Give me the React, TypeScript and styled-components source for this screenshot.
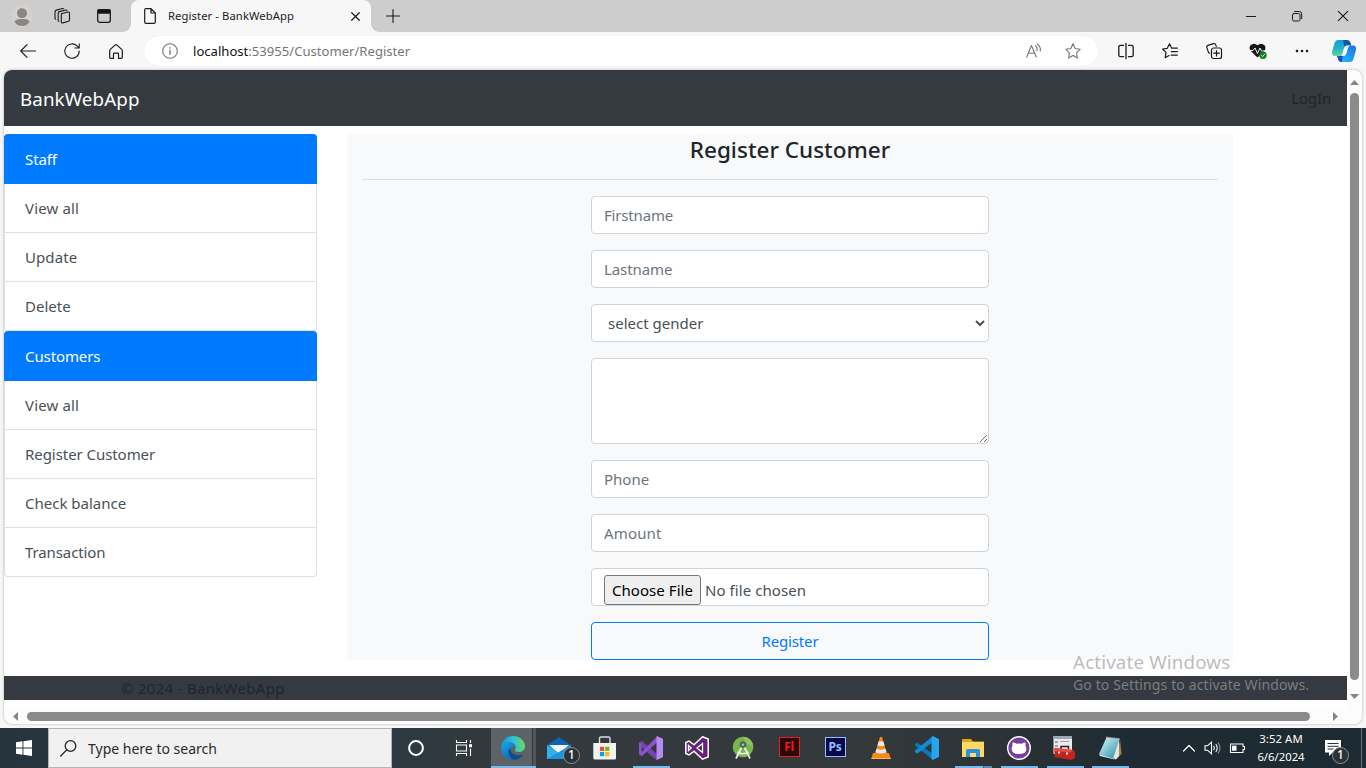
import React from "react";
import styled, { createGlobalStyle, css } from "styled-components";

const Global = createGlobalStyle`
  *, *::before, *::after { box-sizing: border-box; }
  html, body, #root { height: 100%; }
  body { margin: 0; overflow: hidden; font-family: "Noto Sans", "Open Sans", sans-serif; font-size: 15px; line-height: 24px; color: #212529; background: #f7f7f7; }
  svg { display: block; flex: none; overflow: visible; }
`;

const Screen = styled.div`
  position: relative;
  display: flex;
  flex-direction: column;
  width: 1366px;
  height: 768px;
  overflow: hidden;
`;

const Txt = styled.span<{ $ls?: number }>`
  letter-spacing: ${(p) => p.$ls ?? 0}px;
  white-space: nowrap;
`;

/* ---------- browser chrome ---------- */
const TabStrip = styled.div`
  display: flex;
  height: 32px;
  background: #cdcdcd;
`;
const StripCell = styled.div<{ $w: number }>`
  width: ${(p) => p.$w}px;
  display: flex;
  align-items: center;
  justify-content: center;
`;
const Tab = styled.div`
  position: relative;
  display: flex;
  align-items: center;
  width: 240px;
  margin-left: 3px;
  padding: 0 11px 0 13px;
  background: #f7f7f7;
  border-radius: 8px 8px 0 0;
  font-size: 11.25px;
  color: #1b1b1b;
  &::before, &::after {
    content: "";
    position: absolute;
    bottom: 0;
    width: 8px;
    height: 8px;
  }
  &::before { left: -8px; background: radial-gradient(circle at 0 0, #cdcdcd 7.5px, #f7f7f7 8px); }
  &::after { right: -8px; background: radial-gradient(circle at 100% 0, #cdcdcd 7.5px, #f7f7f7 8px); }
`;
const TabTitle = styled(Txt)`
  flex: 1;
  margin-left: 12px;
`;
const Spacer = styled.div`
  flex: 1;
`;
const Toolbar = styled.div`
  display: flex;
  align-items: center;
  height: 38px;
  padding: 0 0 0 6px;
  background: #f7f7f7;
`;
const ToolCell = styled.div<{ $w?: number }>`
  display: flex;
  align-items: center;
  justify-content: center;
  width: ${(p) => p.$w ?? 44}px;
  flex: none;
`;
const Address = styled.div`
  display: flex;
  align-items: center;
  width: 954px;
  height: 30px;
  margin: 0 6px 0 6px;
  padding: 0 17px 0 18px;
  border-radius: 15px;
  background: #fff;
  box-shadow: 0 0 1px #ddd;
  font-size: 13.1px;
  color: #767676;
  b { font-weight: 400; color: #111; }
`;
const Url = styled(Txt)`
  flex: 1;
  margin-left: 15px;
`;
const AddressIcons = styled.div`
  display: flex;
  gap: 23px;
`;

/* ---------- page frame ---------- */
const Frame = styled.div`
  display: grid;
  grid-template: 639px 15px / 1343px 15px;
  width: 1358px;
  height: 654px;
  margin: 0 4px 4px;
  overflow: hidden;
  border-radius: 8px;
  background: #fcfcfc;
  box-shadow: 0 0 3px rgba(0, 0, 0, 0.28);
`;
const Page = styled.div`
  display: flex;
  flex-direction: column;
  background: #fff;
`;
const VScroll = styled.div`
  display: flex;
  flex-direction: column;
  align-items: center;
  padding: 10px 0 9px;
`;
const HScroll = styled.div`
  display: flex;
  align-items: center;
  padding: 0 9px;
`;
const VThumb = styled.div`
  width: 9px;
  height: 587px;
  margin: 8px 0 14px;
  border-radius: 5px;
  background: #8b8b8b;
`;
const HThumb = styled.div`
  width: 1283px;
  height: 9px;
  margin: 0 23px 0 9px;
  border-radius: 5px;
  background: #8b8b8b;
`;

const Navbar = styled.nav`
  display: flex;
  align-items: center;
  justify-content: space-between;
  height: 56px;
  padding: 0 16px 0 16px;
  margin-bottom: 8px;
  background: #343a40;
  color: #212529;
`;
const Brand = styled(Txt)`
  padding-top: 1px;
  font-size: 18.75px;
  color: #fff;
`;
const Body = styled.div`
  display: flex;
  gap: 30px;
  height: 526px;
`;
const Sidebar = styled.div`
  width: 313px;
`;
const Group = styled.ul`
  margin: 0;
  padding: 0;
  list-style: none;
`;
const Item = styled.li<{ $active?: boolean }>`
  display: flex;
  align-items: center;
  height: 49px;
  padding: 0 20px;
  border: 1px solid #dfdfdf;
  border-top: 0;
  color: #495057;
  background: #fff;
  &:last-child { border-radius: 0 0 4px 4px; }
  ${(p) =>
    p.$active &&
    css`
      height: 50px;
      padding-top: 1px;
      color: #fff;
      background: #007bff;
      border-color: #007bff;
      border-radius: 4px 4px 0 0;
    `}
`;
const Panel = styled.section`
  display: flex;
  flex-direction: column;
  align-items: center;
  width: 886px;
  padding: 0 15px;
  background: #f8f9fb;
`;
const Title = styled.h4`
  width: 100%;
  height: 46px;
  margin: 0 0 16px;
  padding-top: 1px;
  border-bottom: 1px solid #dedfe1;
  text-align: center;
  font-size: 22.5px;
  line-height: 30px;
  font-weight: 500;
`;
const Form = styled.form`
  display: flex;
  flex-direction: column;
  gap: 16px;
  width: 398px;
`;
const control = css`
  display: block;
  width: 100%;
  height: 38px;
  margin: 0;
  border: 1px solid #ced4da;
  border-radius: 4px;
  background: #fff;
  color: #495057;
  font: 15px/24px "Noto Sans", "Open Sans", sans-serif;
  outline: none;
`;
const Input = styled.input<{ $ls?: number }>`
  ${control}
  padding: 6px 12px;
  letter-spacing: ${(p) => p.$ls ?? 0}px;
  &::placeholder { color: #6c757d; opacity: 1; }
`;
const Select = styled.select`
  ${control}
  padding: 6px 0 6px 12px;
`;
const Area = styled.textarea`
  ${control}
  height: 86px;
  resize: both;
`;
const FileInput = styled.input`
  ${control}
  padding: 6px 12px 0;
  overflow: hidden;
  letter-spacing: 0.07px;
  &::file-selector-button {
    width: 97px;
    height: 30px;
    padding: 0;
    margin: 0 4px 0 0;
    border: 1px solid #767676;
    border-radius: 3px;
    background: #efefef;
    color: #000;
    font: inherit;
    letter-spacing: inherit;
  }
`;
const Submit = styled.button`
  ${control}
  border-color: #007bff;
  background: transparent;
  color: #007bff;
  letter-spacing: -0.15px;
`;
const Footer = styled.footer`
  height: 24px;
  margin-top: 16px;
  padding-left: 117px;
  background: #343a40;
  color: #212529;
`;

const Watermark = styled.div`
  position: absolute;
  left: 1073px;
  top: 649px;
  display: flex;
  flex-direction: column;
  font-size: 14px;
  line-height: 20px;
  color: rgba(139, 139, 139, 0.85);
`;
const WatermarkTitle = styled(Txt)`
  font-size: 18.75px;
  line-height: 26px;
  color: #bcbdbe;
`;

/* ---------- taskbar ---------- */
const Taskbar = styled.div`
  display: flex;
  height: 40px;
  background: linear-gradient(90deg, #26353d 0, #2b3940 392px, #33393d 500px, #34393c 860px, #2c3235 1000px, #1e2b32 1130px, #1c2a31 100%);
  color: #fff;
`;
const Start = styled.div`
  display: flex;
  align-items: center;
  justify-content: center;
  width: 48px;
`;
const Search = styled.div`
  display: flex;
  align-items: center;
  gap: 11px;
  width: 344px;
  padding: 1px 0 0 11px;
  border: 1px solid #b4b4b4;
  background: #f1f1f1;
  color: #2b2b2b;
  font-size: 14px;
`;
const TaskButton = styled.div<{ $w?: number; $on?: boolean; $open?: boolean; $grouped?: boolean }>`
  position: relative;
  display: flex;
  align-items: center;
  justify-content: center;
  width: ${(p) => p.$w ?? 46}px;
  flex: none;
  ${(p) =>
    p.$on &&
    css`
      width: 45px;
      margin-left: 3px;
      padding-right: 1px;
      background: linear-gradient(90deg, #5d6265 41px, #34393c 41px, #34393c 42px, #505558 42px);
      box-shadow: inset 0 -2px #76b9ed;
    `}
  ${(p) =>
    p.$open &&
    css`
      &::after {
        content: "";
        position: absolute;
        left: ${p.$w ? 4 : 5}px;
        bottom: 0;
        width: 37px;
        height: 2px;
        background: ${p.$grouped ? "linear-gradient(90deg, #76b9ed 28px, #3f6179 28px, #3f6179 29px, #5b8db3 29px)" : "#76b9ed"};
      }
    `}
`;
const Adobe = styled.div<{ $c: string; $bg: string }>`
  width: 21px;
  height: 20px;
  margin-bottom: 3px;
  border: 1.5px solid ${(p) => p.$c};
  background: ${(p) => p.$bg};
  color: ${(p) => p.$c};
  font-size: 12px;
  font-weight: 700;
  line-height: 17px;
  letter-spacing: -0.3px;
  text-align: center;
`;
const Badge = styled.span<{ $x: number; $y: number }>`
  position: absolute;
  left: ${(p) => p.$x}px;
  top: ${(p) => p.$y}px;
  width: 17px;
  height: 17px;
  border: 1px solid #8c9296;
  border-radius: 50%;
  background: #2c3337;
  font-size: 12px;
  font-weight: 500;
  line-height: 14px;
  text-align: center;
`;
const Tray = styled.div`
  position: relative;
  display: flex;
  align-items: center;
  width: 183px;
  border-right: 1px solid #66737a;
`;
const Clock = styled.div`
  display: flex;
  flex-direction: column;
  align-items: center;
  width: 54px;
  margin: 0 17px 0 7px;
  font-size: 11.3px;
  line-height: 18px;
`;

type G = { w: number; h: number; c?: string; sw?: number; children: React.ReactNode };
const Glyph = ({ w, h, c = "#1b1b1b", sw = 1.1, children }: G) => (
  <svg width={w} height={h} viewBox={`0 0 ${w} ${h}`} fill="none" stroke={c} strokeWidth={sw} strokeLinecap="round" strokeLinejoin="round">
    {children}
  </svg>
);
const Art = ({ children, s = 24 }: { children: React.ReactNode; s?: number }) => (
  <svg width={s} height={s} viewBox="0 0 24 24">{children}</svg>
);

const TabBar = () => (
  <TabStrip>
    <StripCell $w={44}>
      <svg width="22" height="22" viewBox="0 0 22 22">
        <circle cx="11" cy="11" r="10.5" fill="#d5d3d0" />
        <circle cx="11" cy="8.3" r="5" fill="#8a8683" />
        <path d="M3.3 16.5Q5 14 8 14h6q3 0 4.700 2.500Q16 21 11 21T3.300 16.500Z" fill="#8a8683" />
      </svg>
    </StripCell>
    <StripCell $w={36}>
      <Glyph w={18} h={16}>
        <path d="M8.300 5.700 14.800 4q1.700-.3 1.700 1.200V12q0 1-1 1.300L10 14.900q-1.700.4-1.700-1.200V7Q8.300 6 9 5.600M5.200 12.700V5.500q0-1.500 1.300-1.900L12.800 2M5.200 12.700l.7.600M2 10.500V4q0-1.500 1.300-1.900L9.500.5M2 10.500l.7.600M12.800 2q.9-.1 1.200.4M9.500.5q.8-.1 1.200.3" />
      </Glyph>
    </StripCell>
    <StripCell $w={48}>
      <Glyph w={14} h={14} sw={1.3}>
        <rect x=".7" y=".7" width="12.600" height="12.600" rx="2" />
        <path d="M1 1h12v3H1z" fill="#111" />
      </Glyph>
    </StripCell>
    <Tab>
      <Glyph w={12} h={16} sw={1.2}>
        <path d="M.7 2q0-1.300 1.300-1.300h5l4.300 4.300v9q0 1.300-1.300 1.300H2Q.7 15.300.7 14ZM7 .7V5h4.300" />
      </Glyph>
      <TabTitle $ls={0.09}>Register - BankWebApp</TabTitle>
      <Glyph w={9} h={9} sw={1.25}><path d="m.7.700 7.600 7.600m0-7.600L.7 8.300" /></Glyph>
    </Tab>
    <StripCell $w={43}>
      <Glyph w={14} h={14}><path d="M7 .5v13M.5 7h13" /></Glyph>
    </StripCell>
    <Spacer />
    <StripCell $w={46}><Glyph w={10} h={10}><path d="M.5 5.500h9" /></Glyph></StripCell>
    <StripCell $w={46}>
      <Glyph w={10} h={10} sw={1}>
        <rect x=".5" y="2.500" width="7.500" height="7.500" rx="1.500" />
        <path d="M2.500 .5h5q2.200 0 2.200 2.200v5" />
      </Glyph>
    </StripCell>
    <StripCell $w={46}><Glyph w={10} h={10}><path d="m.3.300 9.400 9.400m0-9.400L.3 9.700" /></Glyph></StripCell>
  </TabStrip>
);

const star = "M8 .8l2.200 4.700 5 .7-3.600 3.600.8 5.200L8 12.500 3.600 15l.8-5.200L.8 6.200l5-.7Z";

const AddressBar = () => (
  <Toolbar>
    <ToolCell><Glyph w={16} h={14}><path d="M15.500 7H.7M7 .7.700 7 7 13.300" /></Glyph></ToolCell>
    <ToolCell>
      <Glyph w={16} h={16}><path d="M15.200 8A7.200 7.200 0 1 1 13 2.900l2 1.900M15.200.7V5H11" /></Glyph>
    </ToolCell>
    <ToolCell>
      <Glyph w={14} h={15} sw={1.2}>
        <path d="M.7 6.600q0-.7.600-1.200L6 1.100q1-.8 2 0l4.700 4.300q.6.500.6 1.200v6.700q0 1-1 1H9.500V10q0-.8-.8-.8H5.300q-.8 0-.8.800v4.300H1.700q-1 0-1-1Z" />
      </Glyph>
    </ToolCell>
    <Address>
      <Glyph w={16} h={16} c="#767676">
        <circle cx="8" cy="8" r="7.300" />
        <path d="M8 7.300v4M8 4.700v.3" strokeWidth="1.400" />
      </Glyph>
      <Url><b>localhost</b>:53955/Customer/Register</Url>
      <AddressIcons>
        <Glyph w={16} h={16} c="#767676">
          <path d="M.7 14 5.500 2.500 10.300 14M2.300 10.300h6.400M9.500 2.700q2 1.800 1.500 5M11 .8q4 2.700 3.300 7.200" />
        </Glyph>
        <Glyph w={16} h={16} c="#767676"><path d={star} /></Glyph>
      </AddressIcons>
    </Address>
    <ToolCell>
      <Glyph w={16} h={16} sw={1.3}>
        <path d="M5.500 2.300h-3q-1.700 0-1.700 1.700v8q0 1.700 1.700 1.700h3M8 .3v15.400M10.500 2.300h3q1.700 0 1.700 1.700v8q0 1.700-1.700 1.700h-3" />
      </Glyph>
    </ToolCell>
    <ToolCell>
      <Glyph w={16} h={16} sw={1.2}>
        <path d="M10.300 5.200H9.700L7.500.8 5.300 5.300.600 6 4 9.400 3.200 14.800 7 12.600M10.300 5.200h5M9.300 8.700h6M9.300 12.200h6" />
      </Glyph>
    </ToolCell>
    <ToolCell>
      <Glyph w={16} h={16} sw={1.2}>
        <path d="M3.700 10.200 2.500 9.400 .8 4.600Q.4 3 1.900 2.400L7.500.6q1.500-.4 2.100 1L10.300 3.400" />
        <rect x="5.500" y="5" width="10" height="10.500" rx="2" />
        <path d="M10.500 7.500v5.500M7.700 10.200h5.600" />
      </Glyph>
    </ToolCell>
    <ToolCell>
      <svg width="18" height="16" viewBox="0 0 18 16">
        <path d="M8.500 14.500 1.800 8Q-.6 5 1.500 2.200 5-.8 8.500 2.200q3.500-3 7 0Q17.600 5 15.200 8Z" fill="#171717" />
        <path d="M0 7.500h4l2-2.500 2.500 5.500L11 5l1.500 3H17" stroke="#f7f7f7" strokeWidth="1" fill="none" />
        <circle cx="14" cy="12.300" r="3.700" fill="#12801a" />
        <path d="m12.400 12.400 1.200 1.200 2-2.400" stroke="#fff" fill="none" />
      </svg>
    </ToolCell>
    <ToolCell>
      <Glyph w={14} h={4} sw={0}><g fill="#1b1b1b"><circle cx="2" cy="2" r="1.300" /><circle cx="7" cy="2" r="1.300" /><circle cx="12" cy="2" r="1.300" /></g></Glyph>
    </ToolCell>
    <ToolCell $w={40}>
      <svg width="24" height="22" viewBox="0 0 24 22">
        <defs>
          <linearGradient id="cpA" x1="0" y1="0" x2="0" y2="1"><stop stopColor="#1599dd" /><stop offset=".55" stopColor="#26b5c9" /><stop offset="1" stopColor="#61d68c" /></linearGradient>
          <linearGradient id="cpB" x1="1" y1="0" x2="0" y2="1"><stop stopColor="#2a6be0" /><stop offset=".6" stopColor="#18a5f5" /><stop offset="1" stopColor="#28c4fa" /></linearGradient>
        </defs>
        <path d="M6 0h9q2.500 0 3.300 2.500l.9 3H15q-2.300 0-3 2.500l-1.700 6q-.7 2-3 2H3q-4 0-2.800-5L2.700 2.500Q3.600 0 6 0Z" fill="url(#cpA)" />
        <path d="M11 0h4q2.500 0 3.300 2.500l.9 3H15q-2 0-2.700 1.500Z" fill="#0e5a9c" />
        <path d="M18 22H9.500Q7 22 6.200 19.500l-1-3.500h3q2.200 0 3-2.500l1.800-6q.7-2 3-2h5q4 0 2.800 5l-2.500 9Q20.400 22 18 22Z" fill="url(#cpB)" />
        <path d="M5.200 16h3q2 0 2.800-1.700L9.800 22Q7 22 6.200 19.500Z" fill="#1b49d3" />
        <path d="M12.300 7.500Q13 5.500 15 5.500h3q-1.500.7-2 2.500l-1.700 5.700Q13.500 16 11.500 16H8.300q2-.3 2.500-2.500Z" fill="#f7fbff" />
      </svg>
    </ToolCell>
  </Toolbar>
);

const Arrow = ({ d, w, h }: { d: string; w: number; h: number }) => (
  <svg width={w} height={h} viewBox={`0 0 ${w} ${h}`}><path d={d} fill="#858585" /></svg>
);

const staff: [string, number][] = [["View all", 0.15], ["Update", 0.08], ["Delete", 0]];
const customers: [string, number][] = [["View all", 0.15], ["Register Customer", -0.06], ["Check balance", 0], ["Transaction", -0.1]];

const Menu = ({ title, items }: { title: string; items: [string, number][] }) => (
  <Group>
    <Item $active><Txt $ls={-0.1}>{title}</Txt></Item>
    {items.map(([t, ls]) => (
      <Item key={t}><Txt $ls={ls}>{t}</Txt></Item>
    ))}
  </Group>
);

const Cone = () => (
  <Art>
    <path d="M4 17h16l1.800 6H2.200Z" fill="#f08a16" />
    <path d="M11 1h2L18.200 18.500q-6.200 3-12.400 0Z" fill="#f58a1b" />
    <path d="m9.600 5.500 4.800 0 1.200 4q-3.600 1.600-7.200 0ZM7.500 12.700q4.500 2 9 0l1.100 3.500q-5.600 2.600-11.200 0Z" fill="#e9e9e9" />
    <path d="M2.500 22h19l.3 1H2.200Z" fill="#ffb765" />
  </Art>
);

const TaskBar = () => (
  <Taskbar>
    <Start>
      <svg width="16" height="16" viewBox="0 0 16 16" fill="#fff">
        <path d="M0 2.200 6.500 1.300V7.500H0ZM7.400 1.200 16 0V7.500H7.400ZM0 8.400H6.500V14.700L0 13.800ZM7.400 8.400H16V16L7.400 14.800Z" />
      </svg>
    </Start>
    <Search>
      <Glyph w={17} h={17} c="#222" sw={1.3}><circle cx="10.500" cy="6" r="5.300" /><path d="M6.700 9.900.700 16" /></Glyph>
      <Txt>Type here to search</Txt>
    </Search>
    <TaskButton $w={48}><Glyph w={16} h={16} c="#fff" sw={2}><circle cx="8" cy="8" r="6.900" /></Glyph></TaskButton>
    <TaskButton $w={48}>
      <svg width="16" height="16" viewBox="0 0 16 16" fill="none" stroke="#fff" strokeWidth="1.100">
        <path d="M.5 0v2.500h10V0M.5 5h10v6H.5ZM.5 16v-2.500h10V16M14.500 0v3M14.500 8.500V16" />
        <path d="M13 4.200h3v3h-3z" fill="#fff" stroke="none" />
      </svg>
    </TaskButton>
    <TaskButton $on>
      <Art>
        <defs>
          <linearGradient id="eA"><stop stopColor="#1695d7" /><stop offset=".5" stopColor="#2fc0d6" /><stop offset="1" stopColor="#68db5e" /></linearGradient>
          <linearGradient id="eB" x1="0" y1="0" x2="1" y2="1"><stop stopColor="#1ca4e6" /><stop offset="1" stopColor="#0b54a8" /></linearGradient>
        </defs>
        <path d="M.3 10.500C1 4 6 0 12 0c7 0 12 5 12 10 0 4-3 6-6.500 6-3 0-4.200-1.200-3.300-2.500C16 10 13 6.500 9 6.500c-4 0-7.500 1.500-8.700 4Z" fill="url(#eA)" />
        <path d="M.1 11.500C.5 8 4.500 5.500 9 6c4 .4 6 3.500 5.600 6-.5-1.200-1.800-2-3-1.500C7.500 12.500 10 22 18 20.500l3.500-1.300C19 22.500 16 24 12 24 5 24-.2 18.500.1 11.500Z" fill="url(#eB)" />
        <path d="M9.200 12C5.500 15.500 8 22 14 23.800c3.300-.5 6-2.300 7.700-4.800.3-.6-.2-.9-.8-.6C15 21 9.500 18 9.200 12Z" fill="#114a8b" />
      </Art>
    </TaskButton>
    <TaskButton>
      <Art>
        <path d="M0 9 12 1l12 8v14H0Z" fill="#0d63b4" />
        <path d="M2 9h20l-10 9Z" fill="#f2f5f8" />
        <path d="M0 9l12 8 12-8v14H0Z" fill="#31b1ec" />
        <path d="M0 23 24 9v14Z" fill="#1c95dc" />
      </Art>
      <Badge $x={27} $y={18.5}>1</Badge>
    </TaskButton>
    <TaskButton>
      <Art>
        <path d="M6.500 8V2.500Q6.500 1 8 1h7.500Q17 1 17 2.500V8" fill="none" stroke="#dedede" strokeWidth="1.400" />
        <path d="M.3 7h22.700v15q0 1.500-1.500 1.500H1.800Q.3 23.500.3 22Z" fill="#f2f2f2" />
        <path d="M7 10.800h4.200V15H7Z" fill="#f04e23" /><path d="M12.200 10.800h4.200V15h-4.200Z" fill="#7db900" />
        <path d="M7 16h4.200v4.200H7Z" fill="#00a3ee" /><path d="M12.200 16h4.200v4.200h-4.200Z" fill="#fdb813" />
      </Art>
    </TaskButton>
    <TaskButton $open>
      <Art>
        <path d="M0 6.500 3 5l15.500 13.500V24L14 21.500 0 9Z" fill="#7145ad" />
        <path d="M0 6.500v12L3 20 18.500 6V0L2.800 16 2.500 8Z" fill="#8b54cf" />
        <path d="M17.500 0 24 2.700v18.600L17.500 24Z" fill="#b789f1" />
      </Art>
    </TaskButton>
    <TaskButton>
      <Art>
        <path d="M17.500.8 23.200 3v18l-5.700 2.200-8.500-8L4 19 .8 17.500V6.500L4 5l5 3.800Z" fill="#68217a" stroke="#fff" strokeWidth="1.500" />
        <path d="M17.500 7.500v9L12 12ZM3.500 9.500v5L6.200 12Z" fill="#33393d" stroke="#fff" strokeWidth="1.300" />
      </Art>
    </TaskButton>
    <TaskButton>
      <Art>
        <circle cx="12" cy="11" r="10.300" fill="#78b84b" />
        <path d="M12 .7a10.300 10.300 0 0 1 10.300 10.300L16 8Z" fill="#91c55f" />
        <path d="M12 5.500v3" stroke="#455a64" strokeWidth="2" /><circle cx="12" cy="8.800" r="3.400" fill="#50616a" /><circle cx="12" cy="8.800" r="1.200" fill="#a9c78e" />
        <path d="M10.500 11.500 5 22.500M13.500 11.500l5.500 11M6.500 16q5.500 3.500 11 0" fill="none" stroke="#f0f0f0" strokeWidth="1.700" />
      </Art>
    </TaskButton>
    <TaskButton><Adobe $c="#ee1c1c" $bg="#2d0808">Fl</Adobe></TaskButton>
    <TaskButton><Adobe $c="#8ac5fa" $bg="#0b064b">Ps</Adobe></TaskButton>
    <TaskButton><Cone /></TaskButton>
    <TaskButton>
      <Art>
        <path d="m0 8 2-1.600L18 18v6L0 9.500Z" fill="#0878bd" />
        <path d="M0 16v-1.500L18 0v6L2 17.700Z" fill="#118bd2" />
        <path d="M17.500 0 24 3v18l-6.500 3-1-1.200V1.200Z" fill="#27a4ee" />
      </Art>
    </TaskButton>
    <TaskButton $open $grouped>
      <Art>
        <path d="M1 3h9l2 2.500h11V21H1Z" fill="#e0a31c" /><path d="M1 6h22v15H1Z" fill="#ffd865" />
        <path d="M5 21v-6.500Q5 13 6.500 13h11q1.500 0 1.500 1.500V21h-4v-4H9v4Z" fill="#2b92de" />
      </Art>
    </TaskButton>
    <TaskButton $open>
      <Art>
        <circle cx="12" cy="12" r="11.300" fill="#78409d" stroke="#fff" strokeWidth="1.400" />
        <path d="M5.700 6.500Q7 6 9.500 7.700q2.500-.5 5 0Q17 6 18.300 6.500q.6 1.500.1 3.200 1.500 2 .6 5Q18 18 12 18t-7-3.300q-.9-3 .6-5-.5-1.700.1-3.200Z" fill="#fff" />
      </Art>
    </TaskButton>
    <TaskButton $open>
      <Art>
        <path d="M.5 0H19v18H.5Z" fill="#e9ecef" /><path d="M.5 0H19v3H.5Z" fill="#9ba7b4" />
        <path d="M2 5h3v2H2Zm0 4h3v2H2Zm5-4h9v1H7Z" fill="#9aa3ab" />
        <path d="M8 13v-2.500h7.500V13" fill="none" stroke="#4e1212" strokeWidth="1.500" />
        <path d="M1.500 12 20 14l2 1.500V22l-4 2L1.500 21Z" fill="#c72222" /><path d="M1.500 12 20 14l-3 2.500L1.500 15Z" fill="#e44b48" />
        <path d="M5 15.500h2v2H5Zm8 1h2v2h-2Z" fill="#eee" />
      </Art>
    </TaskButton>
    <TaskButton $w={43} $open>
      <Art>
        <defs><linearGradient id="np" x1="0" y1="0" x2="1" y2="1"><stop stopColor="#eafafd" /><stop offset=".5" stopColor="#7fc4d2" /><stop offset="1" stopColor="#2f8497" /></linearGradient></defs>
        <path d="m22 3 1.500 15-5 5Z" fill="#a9813a" />
        <path d="M21 2v18l-3 3.500L12 21Z" fill="#dfe5e8" />
        <path d="M8.500 1.500 21.500 3 15 22.500 1 18Z" fill="url(#np)" />
        <path d="m1 18 14 4.500 1.500 1L2 20Z" fill="#dceff2" />
        <path d="M8.500 1.300 21.500 3" stroke="#d8d8d8" strokeWidth="1.600" strokeDasharray="1 1" />
      </Art>
    </TaskButton>
    <Spacer />
    <Tray>
      <Glyph w={16} h={12} c="#fff" sw={1.2}><path d="M4.500 9 10 3.500 15.500 9" /></Glyph>
      <svg width="34" height="16" viewBox="0 0 34 16" fill="none" stroke="#fff" strokeWidth="1.100">
        <path d="M10 5.800h2.500l4-3.500v11.400l-4-3.500H10Z" />
        <path d="M18.600 5.800q1.500 2.200 0 4.400M20.800 4q2.800 4 0 8" />
        <path d="M23 2.500q4 5.500 0 11" stroke="#8d979c" />
      </svg>
      <svg width="18" height="12" viewBox="2 0 18 12"><path d="M3.500 2h12.500v2.500h1.500v3H16V10.500H3.500Z" fill="none" stroke="#fff" strokeWidth="1.100" /><path d="M5 3.700h4.500v5H5Z" fill="#fff" /></svg>
      <Clock><Txt $ls={0.1}>3:52 AM</Txt><Txt>6/6/2024</Txt></Clock>
      <svg width="16" height="16" viewBox="0 0 16 16"><path d="M0 0h16v12.500H7.500L4 16v-3.500H0Z" fill="#fff" /><path d="M2.500 3.500h11M2.500 6.300h11M2.500 9h6" stroke="#26343b" /></svg>
      <Badge $x={153} $y={19}>1</Badge>
    </Tray>
    <StripCell $w={4} />
  </Taskbar>
);

export default function App() {
  return (
    <Screen>
      <Global />
      <TabBar />
      <AddressBar />
      <Frame>
        <Page>
          <Navbar>
            <Brand $ls={0.1}>BankWebApp</Brand>
            <Txt $ls={-0.15}>LogIn</Txt>
          </Navbar>
          <Body>
            <Sidebar>
              <Menu title="Staff" items={staff} />
              <Menu title="Customers" items={customers} />
            </Sidebar>
            <Panel>
              <Title><Txt>Register Customer</Txt></Title>
              <Form>
                <Input placeholder="Firstname" $ls={-0.18} />
                <Input placeholder="Lastname" $ls={-0.1} />
                <Select><option>select gender</option></Select>
                <Area />
                <Input placeholder="Phone" />
                <Input placeholder="Amount" $ls={0.15} />
                <FileInput type="file" />
                <Submit type="button">Register</Submit>
              </Form>
            </Panel>
          </Body>
          <Footer><Txt $ls={0.29}>© 2024 - BankWebApp</Txt></Footer>
        </Page>
        <VScroll>
          <Arrow w={9} h={5} d="M0 5 4.500 0 9 5Z" />
          <VThumb />
          <Arrow w={9} h={5} d="M0 0h9L4.500 5Z" />
        </VScroll>
        <HScroll>
          <Arrow w={5} h={9} d="M5 0v9L0 4.500Z" />
          <HThumb />
          <Arrow w={5} h={9} d="M0 0v9l5-4.500Z" />
        </HScroll>
      </Frame>
      <TaskBar />
      <Watermark>
        <WatermarkTitle $ls={0.15}>Activate Windows</WatermarkTitle>
        <Txt $ls={0.12}>Go to Settings to activate Windows.</Txt>
      </Watermark>
    </Screen>
  );
}
